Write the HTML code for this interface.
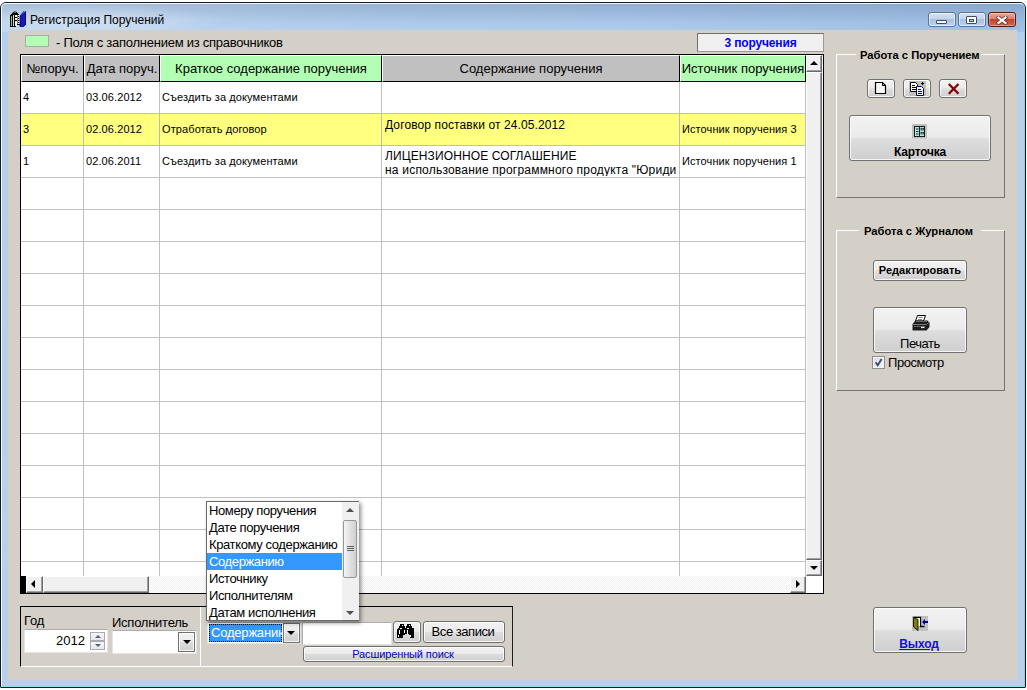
<!DOCTYPE html>
<html lang="ru">
<head>
<meta charset="utf-8">
<title>Регистрация Поручений</title>
<style>
*{box-sizing:border-box;margin:0;padding:0}
html,body{width:1027px;height:690px;overflow:hidden;background:#fff}
body{font-family:"Liberation Sans",Arial,sans-serif;font-size:13px;color:#000;position:relative}
.abs,.abs-all *{position:absolute}
#win{position:absolute;left:0px;top:2px;width:1026px;height:686px;border:1px solid #141c2b;border-radius:6px 6px 1px 1px;
 background:radial-gradient(ellipse 130px 16px at 95px 17px,rgba(255,255,255,.38),rgba(255,255,255,0) 100%) 0 0/300px 29px no-repeat,linear-gradient(90deg,rgba(255,255,255,.22) 0,rgba(255,255,255,.05) 35%,rgba(255,255,255,0) 60%,rgba(70,110,170,.12) 100%) 0 0/100% 29px no-repeat,linear-gradient(180deg,#94b0d1 0px,#9ab7d9 8px,#a8c5e7 18px,#b1cef0 29px,#b6d0ec 40px,#b8d1eb 100%);}
#win:before{content:"";position:absolute;left:0;top:0;right:0;bottom:0;border:1px solid;border-color:rgba(255,255,255,.85) rgba(140,205,230,.9) rgba(150,215,235,.9) rgba(255,255,255,.85);border-radius:5px 5px 0 0}
#client{position:absolute;left:8px;top:30px;width:1009px;height:650px;background:#d4d0c8;overflow:hidden}
#title{position:absolute;left:29px;top:10px;font-size:12px;line-height:15px;white-space:nowrap}
.t{position:absolute;white-space:nowrap;line-height:1}
/* grid */
#grid{position:absolute;left:20px;top:54px;width:804px;height:540px;background:#fff;border:1px solid #000;overflow:hidden}
.hc{position:absolute;top:0;height:27px;background:#c0c0c0;border-right:1px solid #000;border-bottom:1px solid #000;border-left:1px solid #fff;border-top:1px solid #fff;font-size:13px;line-height:26px;text-align:center;white-space:nowrap;overflow:hidden}
.hc.g{background:#b2feb2}
.vl{position:absolute;top:27px;width:1px;height:494px;background:#c0c0c0}
.hl{position:absolute;left:0;width:785px;height:1px;background:#c0c0c0}
.c{position:absolute;white-space:nowrap;font-size:11px;line-height:13px;overflow:hidden;letter-spacing:.1px}
.c2{font-size:12px;line-height:14px;letter-spacing:.11px}
.btn{position:absolute;border:1px solid #707070;border-radius:3px;background:linear-gradient(180deg,#f2f2f2 0%,#ebebeb 48%,#dddddd 52%,#cfcfcf 100%);box-shadow:inset 0 0 0 1px rgba(255,255,255,.8);text-align:center;white-space:nowrap}
.grp{position:absolute;border:1px solid #77726b;border-top-color:#fff;border-left-color:#fff}
.grp span{position:absolute;top:-6px;background:#d4d0c8;font-weight:bold;font-size:11.200px;line-height:13px;padding:0 1px 0 4px;white-space:nowrap}

.sb{position:absolute;background:#f0f0f0;border:1px solid;border-color:#fff #696969 #696969 #fff;box-shadow:inset -1px -1px 0 #a0a0a0}
.trk{position:absolute;background:#f7f7f7;background-image:conic-gradient(#fff 25%,#f0f0f0 0 50%,#fff 0 75%,#f0f0f0 0);background-size:2px 2px}
.arr{position:absolute;width:0;height:0;border:4px solid transparent}
.inp{position:absolute;background:#fff;border:1px solid #e3e3e3;border-top-color:#abadb3}
.li{position:absolute;left:0;width:135px;height:17px;font-size:13px;line-height:18px;padding-left:2px;white-space:nowrap;letter-spacing:-0.38px}
</style>
</head>
<body>
<div id="win">
 <svg style="position:absolute;left:9px;top:8px" width="16" height="16" viewBox="0 0 16 16">
  <path d="M0 4.500 L4 .5 L6 .5 L9 3.500 V14 H6 V16 H0Z" fill="#000"/>
  <rect x="1" y="5" width="1" height="10" fill="#5fd39a"/>
  <rect x="3" y="4" width="1" height="11" fill="#f3e56b"/>
  <path d="M4 2l1-1 1 1z" fill="#f3e56b"/>
  <rect x="5" y="4" width="2" height="11" fill="#f4efe4"/>
  <path d="M5 6h2v1H5zM5 9h2v1H5z" fill="#000"/>
  <rect x="7.500" y="4" width="2" height="10" fill="#fff"/>
  <path d="M8 5h1v1H8zM8 7h1v1H8zM8 9h1v1H8zM8 11h1v1H8zM7 13h3v1H7z" fill="#000"/>
  <path d="M10 4.500 L13.500 .3 L14.500 .3 L12 3.500 L15.200 .2 H16 V13.500 L13.500 16 H10Z" fill="#1a1ab4"/>
  <path d="M10 4.500V16" stroke="#000060" stroke-width=".8"/>
  <path d="M15.500 .5V13.500L13.500 15.500" stroke="#0a0a70" stroke-width="1" fill="none"/>
 </svg>
 <div id="title">Регистрация Поручений</div>
 <!-- caption buttons -->
 <div class="abs" style="position:absolute;left:927px;top:9px;width:28px;height:15px;border:1px solid #5a7498;border-radius:3px;background:linear-gradient(180deg,#d3e1f2 0%,#c3d5ec 45%,#a9c2e0 50%,#bcd2ea 100%);box-shadow:inset 0 0 0 1px rgba(255,255,255,.6)">
  <div style="position:absolute;left:7px;top:7px;width:11px;height:4px;border:1px solid #3d4d63;background:#fff;border-radius:1px"></div>
 </div>
 <div class="abs" style="position:absolute;left:957px;top:9px;width:28px;height:15px;border:1px solid #5a7498;border-radius:3px;background:linear-gradient(180deg,#d3e1f2 0%,#c3d5ec 45%,#a9c2e0 50%,#bcd2ea 100%);box-shadow:inset 0 0 0 1px rgba(255,255,255,.6)">
  <div style="position:absolute;left:7px;top:3px;width:11px;height:8px;border:1px solid #3d4d63;background:#fff;border-radius:1px"></div>
  <div style="position:absolute;left:10px;top:6px;width:5px;height:3px;border:1px solid #3d4d63;background:#b5cbe6"></div>
 </div>
 <div class="abs" style="position:absolute;left:987px;top:9px;width:28px;height:15px;border:1px solid #4b1c18;border-radius:3px;background:linear-gradient(180deg,#e9a99c 0%,#d8806f 45%,#c3432c 50%,#d0694f 100%);box-shadow:inset 0 0 0 1px rgba(255,255,255,.35)">
  <svg style="position:absolute;left:7px;top:3px" width="12" height="9" viewBox="0 0 12 9"><path d="M2.500 1.500 L9.500 7 M9.500 1.500 L2.500 7" stroke="#6a3a36" stroke-width="3.800" stroke-linecap="square"/><path d="M2.500 1.500 L9.500 7 M9.500 1.500 L2.500 7" stroke="#fff" stroke-width="2.200" stroke-linecap="square"/></svg>
 </div>
</div>

<div id="client"></div>

<!-- everything below is positioned in page coordinates -->
<div class="abs" style="position:absolute;left:25px;top:35px;width:24px;height:12px;background:#b4fdb4;border:1px solid #a9a9a9"></div>
<div class="t" id="legend" style="left:56px;top:35px;font-size:13px;line-height:15px;letter-spacing:-0.25px">- Поля с заполнением из справочников</div>

<div class="abs" id="cnt" style="position:absolute;left:697px;top:33px;width:127px;height:19px;background:#f0f0f0;border:1px solid;border-color:#6e6e6e #9a9a9a #9a9a9a #6e6e6e;font-weight:bold;font-size:12px;line-height:19px;letter-spacing:-.15px;color:#0000ff;text-align:center;padding-left:0">3 поручения</div>

<div id="grid">
 <div class="hc" style="left:0;width:63px">№поруч.</div>
 <div class="hc" style="left:63px;width:76px">Дата поруч.</div>
 <div class="hc g" style="left:139px;width:222px">Краткое содержание поручения</div>
 <div class="hc" style="left:361px;width:298px">Содержание поручения</div>
 <div class="hc g" style="left:659px;width:126px">Источник поручения</div>
<div class="vl" style="left:62px"></div>
 <div class="vl" style="left:138px"></div>
 <div class="vl" style="left:360px"></div>
 <div class="vl" style="left:658px"></div>
 <div class="vl" style="left:784px"></div>
 <div class="hl" style="top:58px"></div>
 <div class="hl" style="top:90px"></div>
 <div class="hl" style="top:122px"></div>
 <div class="hl" style="top:154px"></div>
 <div class="hl" style="top:186px"></div>
 <div class="hl" style="top:218px"></div>
 <div class="hl" style="top:250px"></div>
 <div class="hl" style="top:282px"></div>
 <div class="hl" style="top:314px"></div>
 <div class="hl" style="top:346px"></div>
 <div class="hl" style="top:378px"></div>
 <div class="hl" style="top:410px"></div>
 <div class="hl" style="top:442px"></div>
 <div class="hl" style="top:474px"></div>
 <div class="hl" style="top:506px"></div>
 <div class="abs" style="position:absolute;left:0;top:59px;width:784px;height:31px;background:#ffff80"></div>
 <div class="abs" style="position:absolute;left:62px;top:59px;width:1px;height:31px;background:#bcbcb4"></div>
 <div class="abs" style="position:absolute;left:138px;top:59px;width:1px;height:31px;background:#bcbcb4"></div>
 <div class="abs" style="position:absolute;left:360px;top:59px;width:1px;height:31px;background:#bcbcb4"></div>
 <div class="abs" style="position:absolute;left:658px;top:59px;width:1px;height:31px;background:#bcbcb4"></div>
 <div class="c" style="left:2px;top:36px">4</div>
 <div class="c" style="left:65px;top:36px">03.06.2012</div>
 <div class="c" style="left:141px;top:36px">Съездить за документами</div>
 <div class="c" style="left:2px;top:68px">3</div>
 <div class="c" style="left:65px;top:68px">02.06.2012</div>
 <div class="c" style="left:141px;top:68px">Отработать договор</div>
 <div class="c c2" style="left:364px;top:63px;width:294px;height:14px">Договор поставки от 24.05.2012</div>
 <div class="c" style="left:661px;top:68px">Источник поручения 3</div>
 <div class="c" style="left:2px;top:100px">1</div>
 <div class="c" style="left:65px;top:100px">02.06.2011</div>
 <div class="c" style="left:141px;top:100px">Съездить за документами</div>
 <div class="c c2" style="left:364px;top:94px;width:294px;height:27px">ЛИЦЕНЗИОННОЕ СОГЛАШЕНИЕ<br><span style="letter-spacing:.21px">на использование программного продукта "Юриди</span></div>
 <div class="c" style="left:661px;top:100px">Источник поручения 1</div>
 <div class="trk" style="left:785px;top:0;width:17px;height:521px"></div>
 <div class="sb" style="left:785px;top:0;width:16px;height:17px"><div class="arr" style="left:3px;top:0px;border-bottom-color:#000;border-width:0 4px 4px 4px;top:5px"></div></div>
 <div class="sb" style="left:785px;top:17px;width:16px;height:488px"></div>
 <div class="sb" style="left:785px;top:505px;width:16px;height:16px"><div class="arr" style="left:3px;top:5px;border-top-color:#000;border-width:4px 4px 0 4px"></div></div>
 <div class="trk" style="left:0;top:521px;width:785px;height:17px"></div>
 <div style="position:absolute;left:0;top:521px;width:5px;height:17px;background:#000"></div>
 <div class="sb" style="left:5px;top:521px;width:17px;height:17px"><div class="arr" style="left:4px;top:3px;border-right-color:#000;border-width:4px 4px 4px 0"></div></div>
 <div class="sb" style="left:22px;top:521px;width:106px;height:17px"></div>
 <div class="sb" style="left:769px;top:521px;width:16px;height:17px"><div class="arr" style="left:5px;top:3px;border-left-color:#000;border-width:4px 0 4px 4px"></div></div>
 <div style="position:absolute;left:785px;top:521px;width:17px;height:17px;background:#fff"></div>
</div>
<div class="grp" style="left:836px;top:54px;width:169px;height:144px"><span style="left:19px">Работа с Поручением</span></div>
<div class="grp" style="left:836px;top:230px;width:169px;height:161px"><span style="left:22px;padding:0 8px 0 5px">Работа с Журналом</span></div>
<div class="btn" style="left:867px;top:79px;width:28px;height:19px"><svg style="position:absolute;left:6px;top:1px" width="13" height="14" viewBox="0 0 13 14"><path d="M1.500 1.500h7l3 3v8h-10z" fill="#f6f6f6" stroke="#000" stroke-width="1.200"/><path d="M8.500 1.500v3h3" fill="none" stroke="#000" stroke-width="1"/></svg></div>
<div class="btn" style="left:903px;top:79px;width:28px;height:19px"><svg style="position:absolute;left:5px;top:1px" width="17" height="16" viewBox="0 0 17 16"><rect x="0" y="0" width="17" height="15" fill="#c0c0c0"/><path d="M1.5 1.5h5l2 2v7h-7z" fill="#fff" stroke="#000"/><path d="M3 4.5h3M3 6.5h4M3 8.5h4" stroke="#000"/><path d="M7.5 5.5h5l2 2v7h-7z" fill="#fff" stroke="#000080"/><path d="M9 8.5h3M9 10.5h4M9 12.5h4" stroke="#000080"/><path d="M13.5 1v3M12 2.5h3" stroke="#000"/></svg></div>
<div class="btn" style="left:939px;top:79px;width:28px;height:19px"><svg style="position:absolute;left:7px;top:2px" width="14" height="14" viewBox="0 0 14 14"><path d="M1.800 2 L11.500 11.800 M11.500 2 L1.800 11.800" stroke="#800000" stroke-width="2.300"/></svg></div>
<div class="btn big" style="left:849px;top:115px;width:142px;height:46px"><svg style="position:absolute;left:62px;top:8px" width="15" height="15" viewBox="0 0 15 15"><rect width="15" height="14.500" fill="#c0c0c0"/><rect x="2.500" y="2.500" width="10" height="10" fill="#a8f0e8" stroke="#1a1a1a"/><path d="M7.500 3v9" stroke="#1a1a1a"/><path d="M4 5h2.500M4 7.500h2.500M4 10h2.500" stroke="#1a1a1a"/><rect x="9" y="4.300" width="2.500" height="1.600" fill="#fff" stroke="#1a1a1a" stroke-width=".8"/><rect x="9" y="8.300" width="2.500" height="1.600" fill="#fff" stroke="#1a1a1a" stroke-width=".8"/></svg><div class="t" style="left:0;width:140px;top:29px;font-weight:bold;font-size:12px;line-height:14px;text-align:center;letter-spacing:-.2px">Карточка</div></div>
<div class="btn" style="left:873px;top:260px;width:94px;height:21px;font-weight:bold;font-size:11px;line-height:19px">Редактировать</div>
<div class="btn big" style="left:873px;top:307px;width:94px;height:46px"><svg style="position:absolute;left:38px;top:7px" width="18" height="16" viewBox="0 0 18 16"><path d="M5.500 .5h8l-2 5.500h-8z" fill="#fff" stroke="#000"/><path d="M6.500 2.500h4M6 4.500h4" stroke="#777" stroke-width=".9"/><path d="M.5 9 L3.500 5.500 H15.500 L17.500 7.500 V12 L14.500 15.500 H.5z" fill="#1c1c1c"/><path d="M3.800 6.500H15" stroke="#777" stroke-width=".8"/><path d="M1 9.500h13.500l2.500-2.500" stroke="#8a8a8a" fill="none" stroke-width=".9"/><path d="M2 11.500h11" stroke="#666"/><path d="M9 12.500h3.500" stroke="#e8e8e8" stroke-width="1.200"/></svg><div class="t" style="left:0;width:92px;top:29px;font-size:13px;line-height:14px;text-align:center;letter-spacing:-0.45px">Печать</div></div>
<div style="position:absolute;left:872px;top:356px;width:13px;height:13px;border:1px solid #8e8f8f;background:linear-gradient(135deg,#d8dde3,#f6f6f6);box-shadow:inset 0 0 0 1px #f4f4f4"><svg style="position:absolute;left:1px;top:1px" width="9" height="9" viewBox="0 0 9 9"><path d="M1.600 4.300 L3.700 7.300 L7.600 1" fill="none" stroke="#3a4878" stroke-width="1.800"/></svg></div>
<div class="t" style="left:888px;top:355px;font-size:13px;line-height:15px;letter-spacing:-0.45px">Просмотр</div>
<div class="btn big" style="left:873px;top:607px;width:94px;height:46px"><svg style="position:absolute;left:38px;top:8px" width="16" height="16" viewBox="0 0 16 16"><rect width="16" height="15" fill="#c0c0c0"/><path d="M1.500 1.500h7v9h4" fill="none" stroke="#000" stroke-width="1.300"/><rect x="3" y="2" width="5" height="8" fill="#fff"/><path d="M1.500 1.500 L6 3.500 V14.500 L1.500 11z" fill="#808000" stroke="#000" stroke-width=".8"/><path d="M10 6 L13 3 V5 H16 V7 H13 V9z" fill="#000080"/></svg><div class="t" style="left:-1px;width:92px;top:29px;font-weight:bold;font-size:12px;line-height:14px;text-align:center;color:#1010e0;text-decoration:underline;letter-spacing:-.1px">Выход</div></div>
<div style="position:absolute;left:20px;top:606px;width:493px;height:61px;border:1px solid;border-color:#000 #202020 #fff #000"></div>
<div style="position:absolute;left:200px;top:607px;width:1px;height:59px;background:#fff"></div>
<div class="t" style="left:24px;top:613px;font-size:13px;line-height:15px;letter-spacing:-.2px">Год</div>
<div class="t" style="left:112px;top:615px;font-size:13px;line-height:15px;letter-spacing:-0.25px">Исполнитель</div>
<div class="inp" style="left:24px;top:629px;width:84px;height:24px"><div class="t" style="right:22px;top:3px;font-size:13px;line-height:15px">2012</div><div style="position:absolute;left:65px;top:2px;width:15px;height:9px;border:1px solid #a9abb3;background:linear-gradient(#f7f7f9,#e6e8ef)"><div class="arr" style="left:3.500px;top:2px;border-width:0 3px 3px 3px;border-bottom-color:#55607e"></div></div><div style="position:absolute;left:65px;top:11px;width:15px;height:9px;border:1px solid #a9abb3;background:linear-gradient(#f7f7f9,#e6e8ef)"><div class="arr" style="left:3.500px;top:2px;border-width:3px 3px 0 3px;border-top-color:#55607e"></div></div></div>
<div class="inp" style="left:112px;top:630px;width:85px;height:24px"><div class="btn" style="left:65px;top:1px;width:17px;height:20px;border-radius:0"><div class="arr" style="left:4px;top:7px;border-width:4px 4px 0 4px;border-top-color:#000"></div></div></div>
<div class="inp" style="left:207px;top:622px;width:94px;height:22px"><div style="position:absolute;left:1px;top:1px;width:73px;height:18px;background:#3399ff;outline:1px dotted #000;outline-offset:-1px;overflow:hidden"><div class="t" style="left:2px;top:1px;font-size:13px;line-height:15px;color:#fff;letter-spacing:-0.2px">Содержанию</div></div><div class="btn" style="left:75px;top:0px;width:17px;height:20px;border-radius:0"><div class="arr" style="left:3px;top:7px;border-width:4px 4px 0 4px;border-top-color:#000"></div></div></div>
<div class="inp" style="left:302px;top:622px;width:90px;height:23px;border-left-color:#abadb3"></div>
<div class="btn" style="left:393px;top:621px;width:28px;height:22px"><svg style="position:absolute;left:3px;top:2px" width="17" height="14" viewBox="0 0 17 14" shape-rendering="crispEdges"><path d="M3 0h4v2h1v2h1V2h1V0h4v2h1v2h2v1h1v9h-5v-3h-1v-1H8v1H6v3H0V5h1V4h1V2h1z" fill="#000"/><path d="M5 1h1v1H5zM12 1h1v1h-1zM3 4h2v1H3zM10 4h2v1h-2zM2 6h1v4H2zM7 6h1v3H7zM10 6h1v4h-1zM1 11h1v2H1zM13 11h1v2h-1z" fill="#fff"/></svg></div>
<div class="btn" style="left:423px;top:621px;width:82px;height:22px;font-size:13px;line-height:20px;letter-spacing:-0.45px;text-indent:-2px">Все записи</div>
<div class="btn" style="left:303px;top:646px;width:202px;height:16px;font-size:11px;line-height:14px;letter-spacing:-.12px;text-indent:-2px;color:#0000c0">Расширенный поиск</div>
<div style="position:absolute;left:206px;top:501px;width:153px;height:120px;background:#fff;border:1px solid #6a6a6a;box-shadow:2px 2px 4px rgba(0,0,0,.45)">
<div class="li" style="top:0px">Номеру поручения</div>
<div class="li" style="top:17px">Дате поручения</div>
<div class="li" style="top:34px">Краткому содержанию</div>
<div class="li" style="top:51px;background:#3399ff;color:#fff">Содержанию</div>
<div class="li" style="top:68px">Источнику</div>
<div class="li" style="top:85px">Исполнителям</div>
<div class="li" style="top:102px">Датам исполнения</div>
<div style="position:absolute;left:135px;top:0;width:17px;height:118px;background:#f0f0f0"></div>
<div class="arr" style="left:139px;top:6px;border-width:0 4px 4px 4px;border-bottom-color:#505050"></div>
<div class="arr" style="left:139px;top:109px;border-width:4px 4px 0 4px;border-top-color:#505050"></div>
<div style="position:absolute;left:136px;top:18px;width:14px;height:58px;border:1px solid #979797;border-radius:2px;background:linear-gradient(90deg,#f5f5f5,#e2e2e2 50%,#cfcfcf)"><div style="position:absolute;left:3px;top:25px;width:7px;height:1px;background:#606060;box-shadow:0 2px 0 #606060,0 4px 0 #606060"></div></div>
</div>
</body>
</html>
